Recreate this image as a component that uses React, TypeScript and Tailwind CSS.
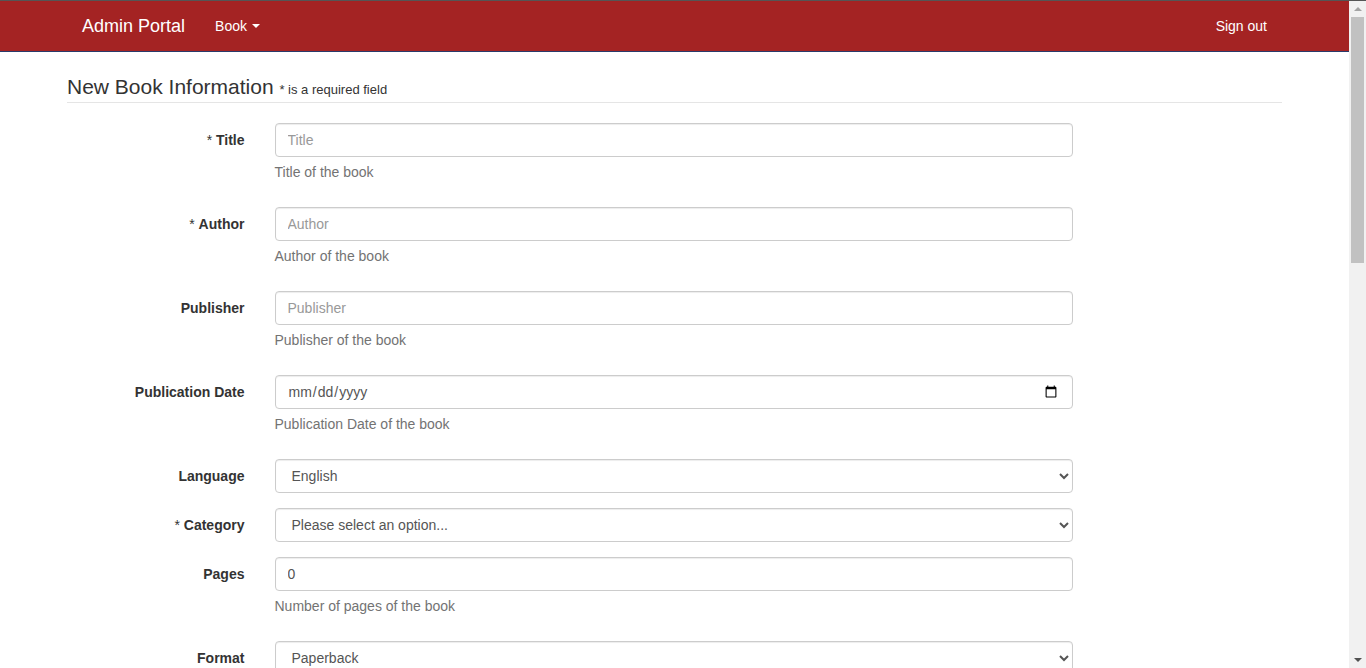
import React from 'react';

type Field = {
  label: string;
  required?: boolean;
  kind: 'text' | 'date' | 'select' | 'number';
  placeholder?: string;
  value?: string;
  help?: string;
  options?: string[];
};

const fields: Field[] = [
  { label: 'Title', required: true, kind: 'text', placeholder: 'Title', help: 'Title of the book' },
  { label: 'Author', required: true, kind: 'text', placeholder: 'Author', help: 'Author of the book' },
  { label: 'Publisher', kind: 'text', placeholder: 'Publisher', help: 'Publisher of the book' },
  { label: 'Publication Date', kind: 'date', help: 'Publication Date of the book' },
  { label: 'Language', kind: 'select', options: ['English', 'Spanish', 'French'] },
  { label: 'Category', required: true, kind: 'select', options: ['Please select an option...', 'Fiction', 'Non-fiction'] },
  { label: 'Pages', kind: 'number', value: '0', help: 'Number of pages of the book' },
  { label: 'Format', kind: 'select', options: ['Paperback', 'Hardcover'] },
];

const inputCls =
  'block w-full h-[34px] px-3 py-[6px] text-[14px] leading-[20px] text-[#555] bg-white border border-[#ccc] rounded-[4px] shadow-[inset_0_1px_1px_rgba(0,0,0,0.075)] placeholder:text-[#999] outline-none';

const FormRow: React.FC<{ f: Field }> = ({ f }) => (
  <div className="flex mb-[15px]">
    <label className="w-[207.5px] shrink-0 px-[15px] pt-[7px] text-right font-bold text-[#333] leading-[20px]">
      {f.required && <span className="font-normal">* </span>}
      {f.label}
    </label>
    <div className="w-[828.5px] shrink-0 px-[15px]">
      {f.kind === 'select' ? (
        <select className={inputCls} defaultValue={f.options?.[0]}>
          {f.options?.map((o) => (
            <option key={o}>{o}</option>
          ))}
        </select>
      ) : (
        <input
          type={f.kind}
          className={inputCls}
          placeholder={f.placeholder}
          defaultValue={f.value}
        />
      )}
      {f.help && <p className="mt-[5px] mb-[10px] text-[#737373] leading-[20px]">{f.help}</p>}
    </div>
  </div>
);

// classic browser scrollbar, drawn since the page is cut to one screen
const Scrollbar: React.FC = () => (
  <div className="w-[17px] shrink-0 bg-[#f1f1f1] flex flex-col items-center">
    <div className="h-[16px] flex items-center justify-center">
      <span className="w-0 h-0 border-x-[4px] border-x-transparent border-b-[4px] border-b-[#a3a3a3]" />
    </div>
    <div className="w-[13px] h-[246px] bg-[#c1c1c1]" />
    <div className="flex-1" />
    <div className="h-[16px] flex items-center justify-center">
      <span className="w-0 h-0 border-x-[4px] border-x-transparent border-t-[4px] border-t-[#505050]" />
    </div>
  </div>
);

export default function App() {
  return (
    <div className="h-[668px] overflow-hidden flex flex-col bg-white border-t border-t-[#555] text-[14px] leading-[20px] text-[#333] font-['Liberation_Sans',Arial,sans-serif]">
      <div className="flex flex-1 min-h-0">
        <div className="flex-1 min-w-0 overflow-hidden">
          {/* Navbar */}
          <nav className="bg-[#a42323] border-b border-b-[#2a3a6a] mb-[20px]">
            <div className="w-[1245px] mx-auto px-[15px] flex h-[50px] items-center">
              <a className="px-[15px] text-[18px] leading-[20px] text-white">Admin Portal</a>
              <a className="px-[15px] text-white flex items-center">
                Book
                <span className="ml-[5px] w-0 h-0 border-x-[4px] border-x-transparent border-t-[4px] border-t-white" />
              </a>
              <a className="ml-auto px-[15px] text-white">Sign out</a>
            </div>
          </nav>

          <div className="w-[1245px] mx-auto px-[15px]">
            <form>
              <fieldset>
                <legend className="w-full mb-[20px] text-[21px] leading-[30px] text-[#333] border-b border-[#e5e5e5]">
                  New Book Information <span className="text-[13px] leading-[17px]">* is a required field</span>
                </legend>
                <div className="-mx-[15px]">
                  {fields.map((f) => (
                    <FormRow key={f.label} f={f} />
                  ))}
                </div>
              </fieldset>
            </form>
          </div>
        </div>
        <Scrollbar />
      </div>
    </div>
  );
}
